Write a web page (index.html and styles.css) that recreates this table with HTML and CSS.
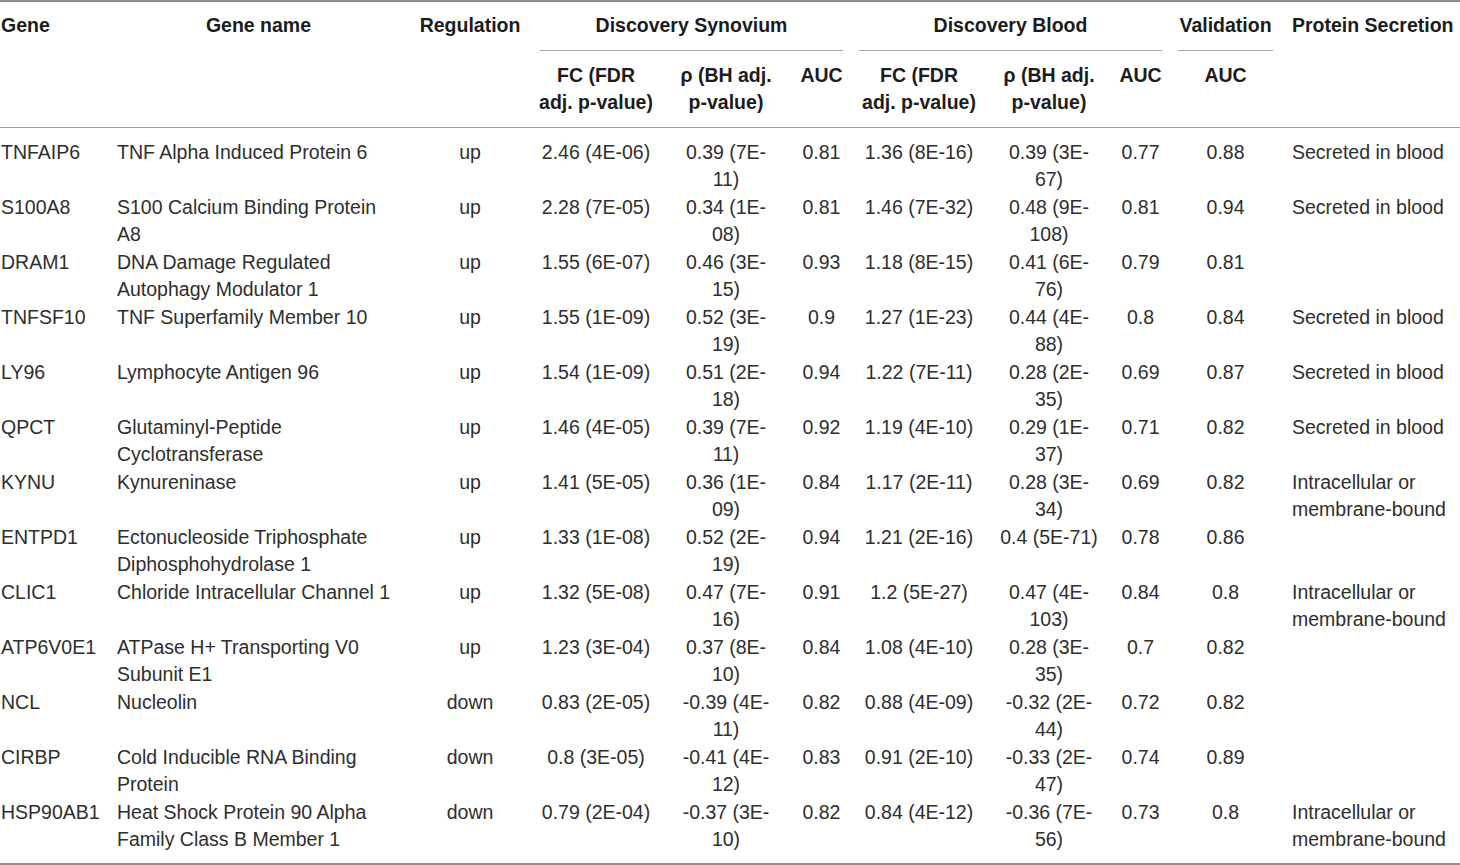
FILE: index.html
```html
<!DOCTYPE html>
<html lang="en">
<head>
<meta charset="utf-8">
<title>Candidate genes</title>
<link rel="stylesheet" href="styles.css">
</head>
<body>
<table class="genes">
  <colgroup>
    <col class="c-gene">
    <col class="c-name">
    <col class="c-reg">
    <col class="c-sfc">
    <col class="c-srho">
    <col class="c-sauc">
    <col class="c-bfc">
    <col class="c-brho">
    <col class="c-bauc">
    <col class="c-val">
    <col class="c-prot">
  </colgroup>
  <thead>
    <tr class="h1">
      <th rowspan="2" class="gene">Gene</th>
      <th rowspan="2" class="name">Gene name</th>
      <th rowspan="2" class="reg">Regulation</th>
      <th colspan="3" class="group"><div class="group-label">Discovery Synovium</div></th>
      <th colspan="3" class="group"><div class="group-label">Discovery Blood</div></th>
      <th class="group"><div class="group-label">Validation</div></th>
      <th rowspan="2" class="prot">Protein Secretion</th>
    </tr>
    <tr class="h2">
      <th class="fc s">FC (FDR adj. p-value)</th>
      <th class="rho s">ρ (BH adj. p-value)</th>
      <th class="auc">AUC</th>
      <th class="fc b">FC (FDR adj. p-value)</th>
      <th class="rho b">ρ (BH adj. p-value)</th>
      <th class="auc">AUC</th>
      <th class="auc">AUC</th>
    </tr>
  </thead>
  <tbody>
    <tr><td class="gene">TNFAIP6</td><td class="name">TNF Alpha Induced Protein 6</td><td class="reg">up</td><td class="fc s">2.46 (4E-06)</td><td class="rho s">0.39 (7E-11)</td><td class="auc">0.81</td><td class="fc b">1.36 (8E-16)</td><td class="rho b">0.39 (3E-67)</td><td class="auc">0.77</td><td class="auc">0.88</td><td class="prot">Secreted in blood</td></tr>
    <tr><td class="gene">S100A8</td><td class="name">S100 Calcium Binding Protein A8</td><td class="reg">up</td><td class="fc s">2.28 (7E-05)</td><td class="rho s">0.34 (1E-08)</td><td class="auc">0.81</td><td class="fc b">1.46 (7E-32)</td><td class="rho b">0.48 (9E-108)</td><td class="auc">0.81</td><td class="auc">0.94</td><td class="prot">Secreted in blood</td></tr>
    <tr><td class="gene">DRAM1</td><td class="name">DNA Damage Regulated Autophagy Modulator 1</td><td class="reg">up</td><td class="fc s">1.55 (6E-07)</td><td class="rho s">0.46 (3E-15)</td><td class="auc">0.93</td><td class="fc b">1.18 (8E-15)</td><td class="rho b">0.41 (6E-76)</td><td class="auc">0.79</td><td class="auc">0.81</td><td class="prot"></td></tr>
    <tr><td class="gene">TNFSF10</td><td class="name">TNF Superfamily Member 10</td><td class="reg">up</td><td class="fc s">1.55 (1E-09)</td><td class="rho s">0.52 (3E-19)</td><td class="auc">0.9</td><td class="fc b">1.27 (1E-23)</td><td class="rho b">0.44 (4E-88)</td><td class="auc">0.8</td><td class="auc">0.84</td><td class="prot">Secreted in blood</td></tr>
    <tr><td class="gene">LY96</td><td class="name">Lymphocyte Antigen 96</td><td class="reg">up</td><td class="fc s">1.54 (1E-09)</td><td class="rho s">0.51 (2E-18)</td><td class="auc">0.94</td><td class="fc b">1.22 (7E-11)</td><td class="rho b">0.28 (2E-35)</td><td class="auc">0.69</td><td class="auc">0.87</td><td class="prot">Secreted in blood</td></tr>
    <tr><td class="gene">QPCT</td><td class="name">Glutaminyl-Peptide Cyclotransferase</td><td class="reg">up</td><td class="fc s">1.46 (4E-05)</td><td class="rho s">0.39 (7E-11)</td><td class="auc">0.92</td><td class="fc b">1.19 (4E-10)</td><td class="rho b">0.29 (1E-37)</td><td class="auc">0.71</td><td class="auc">0.82</td><td class="prot">Secreted in blood</td></tr>
    <tr><td class="gene">KYNU</td><td class="name">Kynureninase</td><td class="reg">up</td><td class="fc s">1.41 (5E-05)</td><td class="rho s">0.36 (1E-09)</td><td class="auc">0.84</td><td class="fc b">1.17 (2E-11)</td><td class="rho b">0.28 (3E-34)</td><td class="auc">0.69</td><td class="auc">0.82</td><td class="prot">Intracellular or membrane-bound</td></tr>
    <tr><td class="gene">ENTPD1</td><td class="name">Ectonucleoside Triphosphate Diphosphohydrolase 1</td><td class="reg">up</td><td class="fc s">1.33 (1E-08)</td><td class="rho s">0.52 (2E-19)</td><td class="auc">0.94</td><td class="fc b">1.21 (2E-16)</td><td class="rho b">0.4 (5E-71)</td><td class="auc">0.78</td><td class="auc">0.86</td><td class="prot"></td></tr>
    <tr><td class="gene">CLIC1</td><td class="name">Chloride Intracellular Channel 1</td><td class="reg">up</td><td class="fc s">1.32 (5E-08)</td><td class="rho s">0.47 (7E-16)</td><td class="auc">0.91</td><td class="fc b">1.2 (5E-27)</td><td class="rho b">0.47 (4E-103)</td><td class="auc">0.84</td><td class="auc">0.8</td><td class="prot">Intracellular or membrane-bound</td></tr>
    <tr><td class="gene">ATP6V0E1</td><td class="name">ATPase H+ Transporting V0 Subunit E1</td><td class="reg">up</td><td class="fc s">1.23 (3E-04)</td><td class="rho s">0.37 (8E-10)</td><td class="auc">0.84</td><td class="fc b">1.08 (4E-10)</td><td class="rho b">0.28 (3E-35)</td><td class="auc">0.7</td><td class="auc">0.82</td><td class="prot"></td></tr>
    <tr><td class="gene">NCL</td><td class="name">Nucleolin</td><td class="reg">down</td><td class="fc s">0.83 (2E-05)</td><td class="rho s">-0.39 (4E-11)</td><td class="auc">0.82</td><td class="fc b">0.88 (4E-09)</td><td class="rho b">-0.32 (2E-44)</td><td class="auc">0.72</td><td class="auc">0.82</td><td class="prot"></td></tr>
    <tr><td class="gene">CIRBP</td><td class="name">Cold Inducible RNA Binding Protein</td><td class="reg">down</td><td class="fc s">0.8 (3E-05)</td><td class="rho s">-0.41 (4E-12)</td><td class="auc">0.83</td><td class="fc b">0.91 (2E-10)</td><td class="rho b">-0.33 (2E-47)</td><td class="auc">0.74</td><td class="auc">0.89</td><td class="prot"></td></tr>
    <tr><td class="gene">HSP90AB1</td><td class="name">Heat Shock Protein 90 Alpha Family Class B Member 1</td><td class="reg">down</td><td class="fc s">0.79 (2E-04)</td><td class="rho s">-0.37 (3E-10)</td><td class="auc">0.82</td><td class="fc b">0.84 (4E-12)</td><td class="rho b">-0.36 (7E-56)</td><td class="auc">0.73</td><td class="auc">0.8</td><td class="prot">Intracellular or membrane-bound</td></tr>
  </tbody>
</table>
</body>
</html>
```

FILE: styles.css
```css
html, body {
  margin: 0;
  padding: 0;
  background: #ffffff;
}

body {
  font-family: "Liberation Sans", Arial, sans-serif;
  font-size: 19.5px;
  line-height: 27.5px;
  color: #2e2e2e;
}

.genes {
  width: 1460px;
  table-layout: fixed;
  border-collapse: separate;
  border-spacing: 0;
}

.c-gene { width: 109px; }
.c-name { width: 299px; }
.c-reg { width: 124px; }
.c-sfc { width: 128px; }
.c-srho { width: 132px; }
.c-sauc { width: 59px; }
.c-bfc { width: 136px; }
.c-brho { width: 124px; }
.c-bauc { width: 59px; }
.c-val { width: 111px; }
.c-prot { width: 179px; }

.genes th,
.genes td {
  box-sizing: border-box;
  padding: 0;
  vertical-align: top;
  text-align: center;
}

.genes th {
  font-weight: bold;
  color: #1c1c1c;
}

/* header first row */
.h1 th {
  border-top: 2px solid #8f8f8f;
  padding-top: 10px;
}

.h1 th[rowspan] {
  border-bottom: 1px solid #9a9a9a;
}

.h1 .group {
  padding-left: 8px;
  padding-right: 8px;
}

.group-label {
  padding-bottom: 10px;
  border-bottom: 1px solid #a5a5a5;
}

.h2 th {
  padding-top: 11px;
  padding-bottom: 10px;
  border-bottom: 1px solid #9a9a9a;
}

/* column alignment */
.gene {
  text-align: left !important;
  padding-left: 1px !important;
}

.genes td.name {
  text-align: left;
  padding-left: 8px;
  padding-right: 15px;
}

.genes th.name {
  padding-left: 8px;
  padding-right: 8px;
}

.genes th.prot,
.genes td.prot {
  text-align: left;
  padding-left: 11px;
}

.fc.s { padding-left: 6.5px; padding-right: 6.5px; }
.fc.b { padding-left: 10.5px; padding-right: 10.5px; }
.rho.s { padding-left: 16px; padding-right: 16px; }
.rho.b { padding-left: 12px; padding-right: 12px; }

/* body spacing */
tbody tr:first-child td {
  padding-top: 11px;
}

tbody tr:last-child td {
  padding-bottom: 9px;
  border-bottom: 2px solid #8f8f8f;
}
```
